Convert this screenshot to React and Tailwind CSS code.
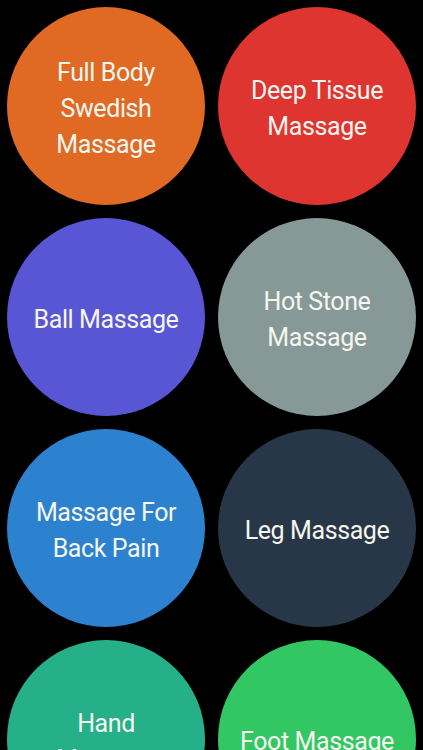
const items = [
  { lines: ['Full Body', 'Swedish', 'Massage'], bg: 'bg-[#e06a24]' },
  { lines: ['Deep Tissue', 'Massage'], bg: 'bg-[#de3530]' },
  { lines: ['Ball Massage'], bg: 'bg-[#5956d6]' },
  { lines: ['Hot Stone', 'Massage'], bg: 'bg-[#869996]' },
  { lines: ['Massage For', 'Back Pain'], bg: 'bg-[#2d82cf]' },
  { lines: ['Leg Massage'], bg: 'bg-[#283747]' },
  { lines: ['Hand', 'Massage'], bg: 'bg-[#26b08a]' },
  { lines: ['Foot Massage'], bg: 'bg-[#33c764]' },
];

export default function App() {
  return (
    <div className="h-[750px] w-[423px] overflow-hidden bg-black px-[7px] pt-[7px] font-['Roboto','Liberation_Sans',sans-serif]">
      <div className="grid grid-cols-[198px_198px] gap-[13px]">
        {items.map((item, i) => (
          <button
            key={i}
            className={`flex h-[198px] w-[198px] flex-col items-center justify-center rounded-full pt-[6px] ${item.bg} text-center text-[25px] leading-[36px] tracking-[-0.4px] text-[#f6f6f1]`}
          >
            {item.lines.map((l) => (
              <span key={l}>{l}</span>
            ))}
          </button>
        ))}
      </div>
    </div>
  );
}
